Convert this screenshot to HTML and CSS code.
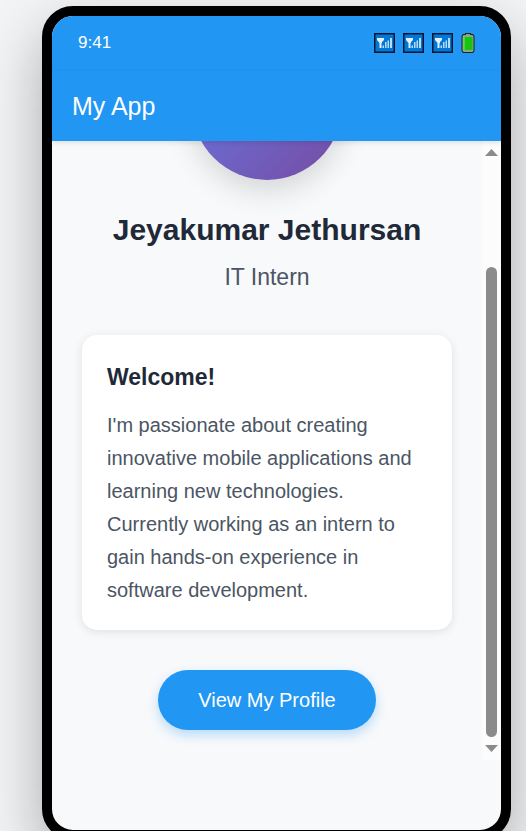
FILE: index.html
```html
<!DOCTYPE html>
<html lang="en">
<head>
<meta charset="utf-8">
<meta name="viewport" content="width=device-width, initial-scale=1">
<title>My App</title>
<link rel="stylesheet" href="styles.css">
</head>
<body>
<svg class="sprite" aria-hidden="true">
  <symbol id="signal" viewBox="0 0 21 20">
    <rect width="21" height="20" fill="#06152b"/>
    <rect x="1.500" y="1.500" width="18" height="17" fill="#0078d7"/>
    <path d="M3 5h7v2L8 9v1H7.500v5H5.500v-5L3 7z" fill="#e6f1fb"/>
    <path d="M8.500 12.500H10V15H8.500zM11 9h1.500v6H11zM13.500 7.500H15V15h-1.500zM16 5h2v10h-2z" fill="#b9dbf6"/>
  </symbol>
  <symbol id="battery" viewBox="0 0 14 20">
    <path d="M4 0h6v1h2l1.500 2v15L12 20H2L.5 18V3L2 1h2z" fill="#17251b"/>
    <path d="M5 1h4v1h2.500l1 1.500v14L11.500 19h-9l-1-1.500v-14L2.500 2H5z" fill="#8fa58c"/>
    <path d="M2.500 4h9v13h-9z" fill="#16c60c"/>
    <path d="M2.500 4h1v13h-1z" fill="#86e07f"/>
  </symbol>
</svg>
<div class="phone">
  <div class="status-bar">
    <span>9:41</span>
    <div class="status-icons">
      <svg class="signal"><use href="#signal"/></svg>
      <svg class="signal"><use href="#signal"/></svg>
      <svg class="signal"><use href="#signal"/></svg>
      <svg class="battery"><use href="#battery"/></svg>
    </div>
  </div>
  <header class="app-bar">My App</header>
  <div class="viewport">
    <main class="content">
      <div class="avatar"></div>
      <h1 class="name">Jeyakumar Jethursan</h1>
      <p class="role">IT Intern</p>
      <section class="card">
        <h2 class="card-title">Welcome!</h2>
        <p class="card-text">I'm passionate about creating innovative mobile applications and learning new technologies. Currently working as an intern to gain hands-on experience in software development.</p>
      </section>
      <button class="profile-button" type="button">View My Profile</button>
    </main>
    <div class="scrollbar" aria-hidden="true">
      <svg class="arrow" viewBox="0 0 13 7"><path d="M0 7L6.500 0L13 7z"/></svg>
      <div class="track"><div class="thumb"></div></div>
      <svg class="arrow" viewBox="0 0 13 7"><path d="M0 0L6.500 7L13 0z"/></svg>
    </div>
  </div>
</div>
</body>
</html>
```
FILE: styles.css
```css
* {
  box-sizing: border-box;
}

body {
  margin: 0;
  height: 100vh;
  padding: 6px 15px 0 42px;
  overflow: hidden;
  background: #f3f4f6;
  font-family: "Liberation Sans", Arial, sans-serif;
}

h1, h2, p {
  margin: 0;
}

.sprite {
  display: none;
}

.phone {
  display: flex;
  flex-direction: column;
  height: calc(100vh + 3px);
  padding-bottom: 70px;
  border: 10px solid #000;
  border-radius: 31px;
  overflow: hidden;
  background: #f8f9fb;
  box-shadow: 0 25px 60px rgba(0, 0, 0, 0.3);
}

.status-bar {
  display: flex;
  flex: none;
  align-items: center;
  justify-content: space-between;
  height: 55px;
  padding: 0 26px 1px;
  background: #2196f3;
  color: #fff;
  font-size: 17px;
}

.status-icons {
  display: flex;
  gap: 8px;
}

.signal {
  width: 21px;
  height: 20px;
}

.battery {
  width: 14px;
  height: 20px;
}

.app-bar {
  display: flex;
  flex: none;
  align-items: center;
  height: 70px;
  padding: 0 20px;
  position: relative;
  background: #2196f3;
  box-shadow: 0 2px 5px rgba(0, 0, 0, 0.1);
  color: #fff;
  font-size: 25px;
}

.viewport {
  display: flex;
  flex: 1;
  min-height: 0;
  overflow: hidden;
}

.content {
  display: flex;
  flex: 1;
  flex-direction: column;
  align-items: center;
  justify-content: flex-end;
  min-width: 0;
  padding: 30px;
}

.avatar {
  flex: none;
  width: 150px;
  height: 150px;
  margin-bottom: 30px;
  border-radius: 50%;
  background: linear-gradient(135deg, #667eea, #764ba2);
  box-shadow: 0 10px 30px rgba(0, 0, 0, 0.15);
}

.name {
  margin-bottom: 10px;
  color: #1f2937;
  font-size: 30px;
  line-height: 40px;
}

.role {
  margin-bottom: 41px;
  color: #4b5563;
  font-size: 23px;
  line-height: 34px;
}

.card {
  width: 100%;
  margin-bottom: 40px;
  padding: 25px 25px 23px;
  border-radius: 15px;
  background: #fff;
  box-shadow: 0 2px 10px rgba(0, 0, 0, 0.1);
}

.card-title {
  margin-bottom: 15px;
  color: #1f2937;
  font-size: 23px;
  line-height: 34px;
}

.card-text {
  color: #4b5563;
  font-size: 20px;
  line-height: 33px;
}

.profile-button {
  flex: none;
  height: 60px;
  padding: 0 40px;
  border: 0;
  border-radius: 30px;
  background: #2196f3;
  box-shadow: 0 5px 12px rgba(33, 150, 243, 0.3);
  color: #fff;
  font-family: inherit;
  font-size: 20px;
}

.scrollbar {
  display: flex;
  flex-direction: column;
  align-items: center;
  gap: 8px;
  width: 19px;
  padding: 8px 0;
  background: #fcfcfc;
}

.arrow {
  flex: none;
  width: 13px;
  height: 7px;
  fill: #8b8b8b;
}

.track {
  display: flex;
  flex: 1;
  flex-direction: column;
  justify-content: flex-end;
}

.thumb {
  width: 11px;
  height: 82%;
  border-radius: 6px;
  background: #8b8b8b;
}
```
